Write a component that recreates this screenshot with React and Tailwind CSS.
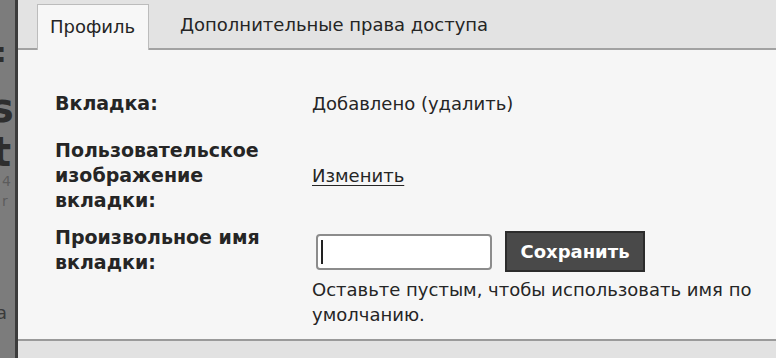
import React from "react";

export default function App() {
  return (
    <div className="w-[776px] h-[358px] flex overflow-hidden bg-[#f6f6f6] text-[#252525] font-['DejaVu_Sans',sans-serif]">
      {/* left background strip */}
      <div className="w-[18px] shrink-0 bg-[#7c7c7c] border-r-[3px] border-[#3c3c3c] flex flex-col overflow-hidden text-[#2e2e2e] leading-none">
        <span className="mt-[40px] text-[26px] font-bold -ml-[4px]">:</span>
        <span className="mt-[22px] text-[40px] font-bold -ml-[10px]">s</span>
        <span className="mt-[4px] text-[40px] font-bold -ml-[8px]">t</span>
        <span className="mt-[2px] text-[14px] text-[#5c5c5c] ml-[2px]">4</span>
        <span className="mt-[6px] text-[14px] text-[#5c5c5c] ml-[2px]">r</span>
        <span className="mt-[96px] text-[18px] text-[#3a3a3a] -ml-[4px]">a</span>
      </div>

      <div className="flex-1 flex flex-col">
        {/* tab bar */}
        <div className="h-[50px] shrink-0 bg-[#e3e3e3] border-b-2 border-[#a2a2a2] flex items-end pl-[19px] text-[18px]">
          <div className="w-[112px] h-[46px] -mb-[2px] bg-[#f7f7f7] border border-b-0 border-[#bcbcbc] flex items-center pl-[12px] pb-[2px]">
            Профиль
          </div>
          <div className="h-[46px] flex items-center pl-[31px] pb-[2px]">
            Дополнительные права доступа
          </div>
        </div>

        {/* content */}
        <div className="flex-1 pl-[37px] pt-[41px] text-[18px] leading-[25px]">
          <div className="flex">
            <div className="w-[257px] font-bold text-[19px]">Вкладка:</div>
            <div>Добавлено (удалить)</div>
          </div>

          <div className="flex items-center mt-[22px]">
            <div className="w-[257px] font-bold text-[19px]">
              Пользовательское
              <br />
              изображение
              <br />
              вкладки:
            </div>
            <div className="underline underline-offset-[3px]">Изменить</div>
          </div>

          <div className="flex mt-[12px]">
            <div className="w-[257px] font-bold text-[19px]">
              Произвольное имя
              <br />
              вкладки:
            </div>
            <div className="flex flex-col pt-[6px]">
              <div className="flex items-center">
                <div className="ml-[4px] w-[176px] h-[36px] bg-white border-2 border-[#8c8c8c] rounded-[4px] flex items-center pl-[3px]">
                  <div className="w-[2px] h-[24px] bg-[#222]" />
                </div>
                <div className="ml-[13px] w-[140px] h-[41px] bg-[#494949] border-2 border-[#2c2c2c] flex items-center justify-center text-white font-bold text-[18px]">
                  Сохранить
                </div>
              </div>
              <div className="mt-[5px] w-[450px]">
                Оставьте пустым, чтобы использовать имя по умолчанию.
              </div>
            </div>
          </div>
        </div>

        {/* bottom bar */}
        <div className="h-[19px] shrink-0 bg-[#e2e2e2] border-t-2 border-[#9a9a9a]" />
      </div>
    </div>
  );
}
